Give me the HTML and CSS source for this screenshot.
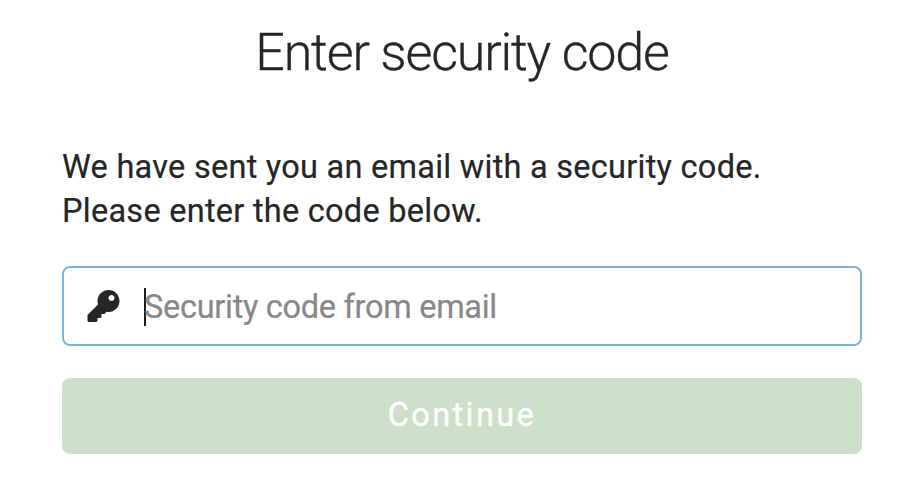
FILE: index.html
```html
<!DOCTYPE html>
<html lang="en">
<head>
<meta charset="utf-8">
<title>Enter security code</title>
<link rel="stylesheet" href="styles.css">
</head>
<body>
<main class="panel">
  <h1 class="title">Enter security code</h1>
  <p class="message">We have sent you an email with a security code.<br>Please enter the code below.</p>
  <div class="field">
    <svg class="key" viewBox="0 0 512 512" aria-hidden="true"><path d="M512 176c0 97.200-78.800 176-176 176-11.200 0-22.200-1.100-32.800-3.100l-24 27a24 24 0 0 1-17.900 8.100H224v40c0 13.300-10.700 24-24 24h-40v40c0 13.300-10.700 24-24 24H24c-13.300 0-24-10.700-24-24v-78.100c0-6.400 2.500-12.500 7-17l161.800-161.800C162.900 213.800 160 195.200 160 176 160 78.800 238.800 0 336 0s176 78.500 176 176zM336 128c0 26.500 21.500 48 48 48s48-21.500 48-48-21.500-48-48-48-48 21.500-48 48z"/></svg>
    <span class="caret"></span>
    <span class="placeholder">Security code from email</span>
  </div>
  <button class="submit" type="button">Continue</button>
</main>
</body>
</html>
```
FILE: styles.css
```css
* { box-sizing: border-box; }
body { margin: 0; background: #fff; color: #262626; font-family: Roboto, sans-serif; }
.panel { width: 800px; margin-left: 62px; padding-top: 21px; }
.title { margin: 0; height: 64px; line-height: 64px; font-size: 52px; font-weight: 300; letter-spacing: -1.17px; text-align: center; white-space: nowrap; -webkit-text-stroke: 0.3px #262626; }
.message { margin: 60px 0 33px; font-size: 32.5px; line-height: 44px; letter-spacing: 0.26px; white-space: nowrap; -webkit-text-stroke: 0.2px #262626; }
.field { display: flex; align-items: center; height: 80px; padding-left: 23px; border: 2px solid #7bb5d8; border-radius: 8px; }
.key { width: 33px; height: 32px; margin-bottom: 1px; fill: #262626; }
.caret { width: 2px; height: 38px; margin: 1px 0 0 24px; background: #1c1c1c; }
.placeholder { margin: 1px 0 0 -2px; color: #888; font-size: 32.5px; letter-spacing: -0.29px; white-space: nowrap; -webkit-text-stroke: 0.2px #888; }
.submit { display: block; width: 100%; height: 76px; margin-top: 32px; padding: 0 0 3px; border: 0; border-radius: 8px; background: #cde0ca; color: #fff; font: 400 32.5px Roboto, sans-serif; letter-spacing: 2.4px; -webkit-text-stroke: 0.4px #fff; }
```
